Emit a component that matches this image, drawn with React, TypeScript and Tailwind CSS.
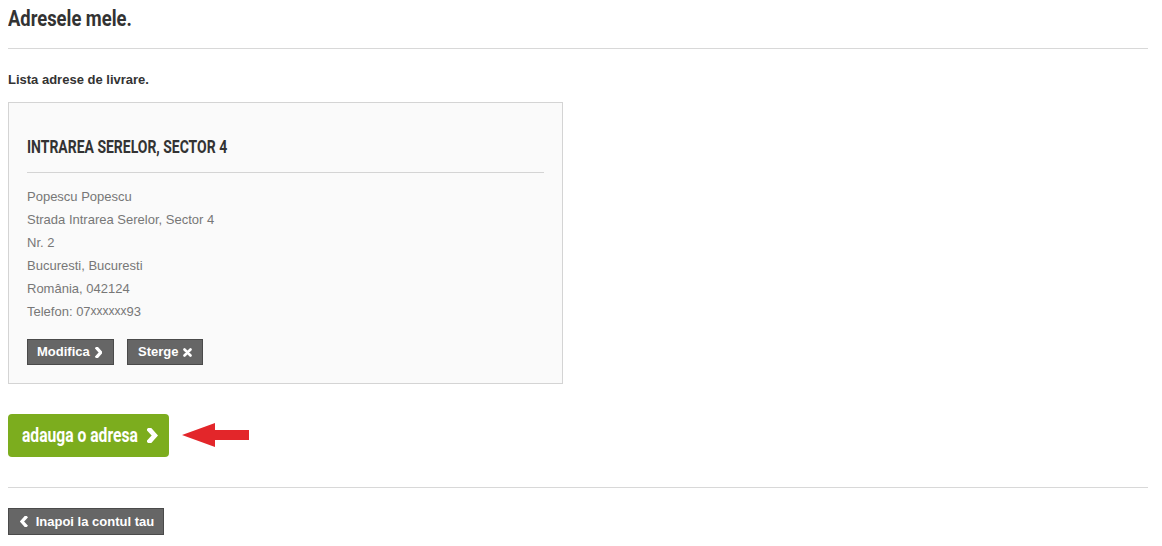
const narrow = "font-['Roboto',sans-serif] inline-block whitespace-nowrap origin-left";
const body = "font-['Liberation_Sans',Arial,sans-serif]";

const lines = [
  "Popescu Popescu",
  "Strada Intrarea Serelor, Sector 4",
  "Nr. 2",
  "Bucuresti, Bucuresti",
  "România, 042124",
];

function Chevron({ size = 10, left = false, w = 3 }: { size?: number; left?: boolean; w?: number }) {
  return (
    <svg width={size * 0.7} height={size} viewBox="0 0 7 10" className="shrink-0">
      <polyline
        points={left ? "5.2,1.2 1.8,5 5.2,8.8" : "1.8,1.2 5.2,5 1.8,8.8"}
        fill="none"
        stroke="currentColor"
        strokeWidth={w}
        strokeLinecap="square"
        strokeLinejoin="miter"
      />
    </svg>
  );
}

function Cross() {
  return (
    <svg width="9" height="9" viewBox="0 0 9 9" className="shrink-0">
      <path d="M1.5 1.5 L7.5 7.5 M7.5 1.5 L1.5 7.5" stroke="currentColor" strokeWidth="2.6" strokeLinecap="round" />
    </svg>
  );
}

function GrayButton({ children, className = "" }: { children: React.ReactNode; className?: string }) {
  return (
    <button className={`h-[26px] flex items-center bg-[#666666] border border-[#4a4a4a] text-white text-[13px] font-bold ${body} ${className}`}>
      {children}
    </button>
  );
}

export default function App() {
  return (
    <div className={`w-[1162px] h-[546px] bg-white px-2 pt-[6px] ${body}`}>
      <h1 className="h-[26px] text-[22px] leading-[26px] text-[#333333] font-bold">
        <span className={`${narrow} scale-x-[0.835]`}>Adresele mele.</span>
      </h1>
      <div className="mt-[16px] w-[1140px] h-px bg-[#d8d8d8]" />

      <p className="mt-[23px] text-[13px] leading-[15px] font-bold text-[#333333]">Lista adrese de livrare.</p>

      <div className="mt-[15px] w-[555px] h-[282px] bg-[#fafafa] border border-[#d4d4d4] px-[18px] pt-[33px]">
        <h3 className="h-[22px] text-[19px] leading-[22px] font-bold text-[#333333]">
          <span className={`${narrow} scale-x-[0.735]`}>INTRAREA SERELOR, SECTOR 4</span>
        </h3>
        <div className="mt-[14px] h-px bg-[#d4d4d4]" />
        <div className="mt-[12px] text-[13px] leading-[23px] text-[#777777]">
          {lines.map((l) => (
            <div key={l}>{l}</div>
          ))}
          <div>
            Telefon: 07<span className="text-[12px] relative -top-[1px]">xxxxxx</span>93
          </div>
        </div>
        <div className="mt-[15px] flex gap-[13px]">
          <GrayButton className="w-[87px] pl-[9px] gap-[5px]">
            Modifica <Chevron size={11} />
          </GrayButton>
          <GrayButton className="w-[76px] pl-[10px] gap-[5px]">
            Sterge <Cross />
          </GrayButton>
        </div>
      </div>

      <div className="mt-[30px] flex items-center gap-[13px]">
        <button className="h-[43px] w-[161px] rounded-[4px] bg-[#7cad1e] text-white flex items-center pl-[14px] text-[21px] font-bold">
          <span className="w-[118px] text-left">
            <span className={`${narrow} scale-x-[0.745]`}>adauga o adresa</span>
          </span>
          <span className="ml-[7px]">
            <Chevron size={15} w={3.2} />
          </span>
        </button>
        <svg width="68" height="26" viewBox="0 0 68 26">
          <polygon points="0,12 33,0 33,7 67,7 67,17 33,17 33,24" fill="#e3262a" />
        </svg>
      </div>

      <div className="mt-[30px] w-[1140px] h-px bg-[#d8d8d8]" />

      <div className="mt-[20px]">
        <GrayButton className="h-[27px] w-[156px] pl-[11px] gap-[8px]">
          <Chevron size={11} left />
          <span>Inapoi la contul tau</span>
        </GrayButton>
      </div>
    </div>
  );
}
